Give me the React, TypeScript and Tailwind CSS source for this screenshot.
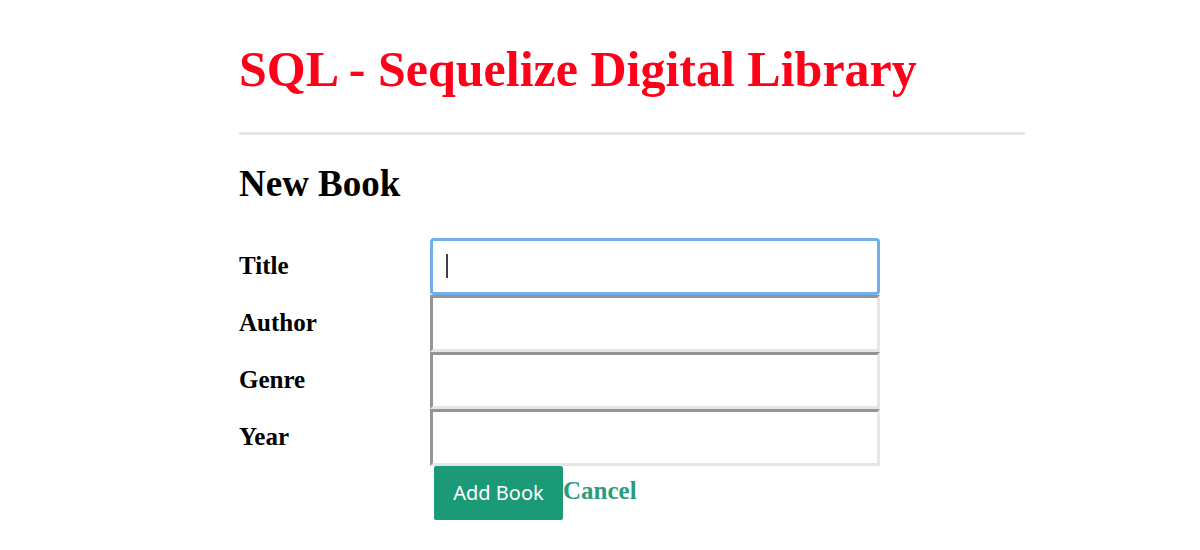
const labelClass = 'w-[191px] shrink-0 pb-0.5 text-[25px] leading-[30px] font-bold';
const inputClass =
  'block h-[57px] w-full border-[3px] border-t-[#949494] border-l-[#949494] border-r-[#e6e6e6] border-b-[#e6e6e6] bg-white px-3 text-[22px] outline-none';

const fields = [
  { id: 'author', label: 'Author' },
  { id: 'genre', label: 'Genre' },
  { id: 'year', label: 'Year' },
];

export default function App() {
  return (
    <main className="mx-auto w-full max-w-[786px] translate-x-8 bg-white pt-10 font-['Liberation_Serif',serif] text-black">
      <h1 className="text-[50px] leading-[58px] font-bold text-[#ff0019]">
        SQL - Sequelize Digital Library
      </h1>
      <hr className="mt-[34px] border-t-[3px] border-[#e6e6e6]" />
      <h2 className="mt-[27px] text-[37px] leading-[44px] font-bold">New Book</h2>
      <form className="mt-8" onSubmit={(e) => e.preventDefault()}>
        <div className="flex items-center">
          <label htmlFor="title" className={labelClass}>Title</label>
          <div className="relative w-full max-w-[450px]">
            <input
              id="title"
              type="text"
              autoFocus
              placeholder=" "
              className="peer block h-[57px] w-full rounded-sm border-[3px] border-[#70aeef] bg-white px-3 text-[22px] outline-none placeholder-shown:caret-transparent"
            />
            <span
              aria-hidden="true"
              className="pointer-events-none absolute top-4 left-4 hidden h-6 w-0.5 bg-[#3c3f4a] peer-placeholder-shown:block"
            />
          </div>
        </div>
        {fields.map(({ id, label }) => (
          <div key={id} className="flex items-center">
            <label htmlFor={id} className={labelClass}>{label}</label>
            <div className="w-full max-w-[450px]">
              <input id={id} type="text" className={inputClass} />
            </div>
          </div>
        ))}
        <div className="flex items-center pl-[195px]">
          <button
            type="submit"
            className="h-[54px] w-[129px] rounded-xs bg-[#1b9a78] font-['Noto_Sans',sans-serif] text-[20px] text-white"
          >
            Add Book
          </button>
          <a href="#books" className="pb-1 text-[25px] leading-[30px] font-bold text-[#2a9c7c]">Cancel</a>
        </div>
      </form>
    </main>
  );
}
